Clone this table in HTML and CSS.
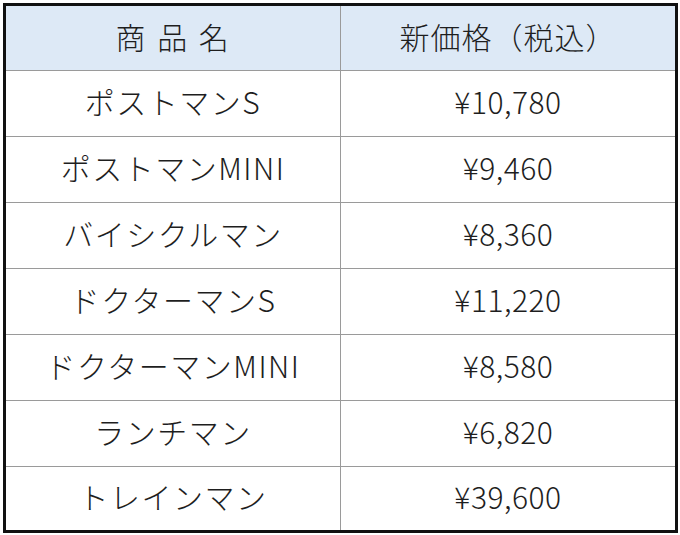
FILE: index.html
```html
<!DOCTYPE html>
<html lang="ja">
<head>
<meta charset="utf-8">
<link rel="stylesheet" href="styles.css">
</head>
<body>
<div class="price-table">
  <div class="cell head name">商 品 名</div>
  <div class="cell head price">新価格（税込）</div>
  <div class="cell name">ポストマンS</div>
  <div class="cell price">¥10,780</div>
  <div class="cell name">ポストマンMINI</div>
  <div class="cell price">¥9,460</div>
  <div class="cell name">バイシクルマン</div>
  <div class="cell price">¥8,360</div>
  <div class="cell name">ドクターマンS</div>
  <div class="cell price">¥11,220</div>
  <div class="cell name">ドクターマンMINI</div>
  <div class="cell price">¥8,580</div>
  <div class="cell name">ランチマン</div>
  <div class="cell price">¥6,820</div>
  <div class="cell name last">トレインマン</div>
  <div class="cell price last">¥39,600</div>
</div>
</body>
</html>
```

FILE: styles.css
```css
html, body {
  margin: 0;
  padding: 0;
  background: #ffffff;
}
body {
  padding: 3px;
}
.price-table {
  width: 669px;
  border: 3px solid #111;
  display: grid;
  grid-template-columns: 335px 334px;
  grid-template-rows: 65px repeat(6, 66px) 63px;
  font-family: "Noto Sans CJK JP", "Noto Sans", sans-serif;
  font-size: 30px;
  font-weight: 300;
  color: #1e1e1e;
}
.cell {
  display: flex;
  align-items: center;
  justify-content: center;
  border-bottom: 1px solid #9a9a9a;
  line-height: 1;
  letter-spacing: 0.5px;
  padding-bottom: 5px;
}
.cell.name {
  border-right: 1px solid #9a9a9a;
  letter-spacing: 1.5px;
}
.cell.last {
  border-bottom: none;
}
.cell.head {
  background: #dde9f6;
}
.head.name {
  word-spacing: 2px;
}
.head.price {
  letter-spacing: 1px;
}
```
